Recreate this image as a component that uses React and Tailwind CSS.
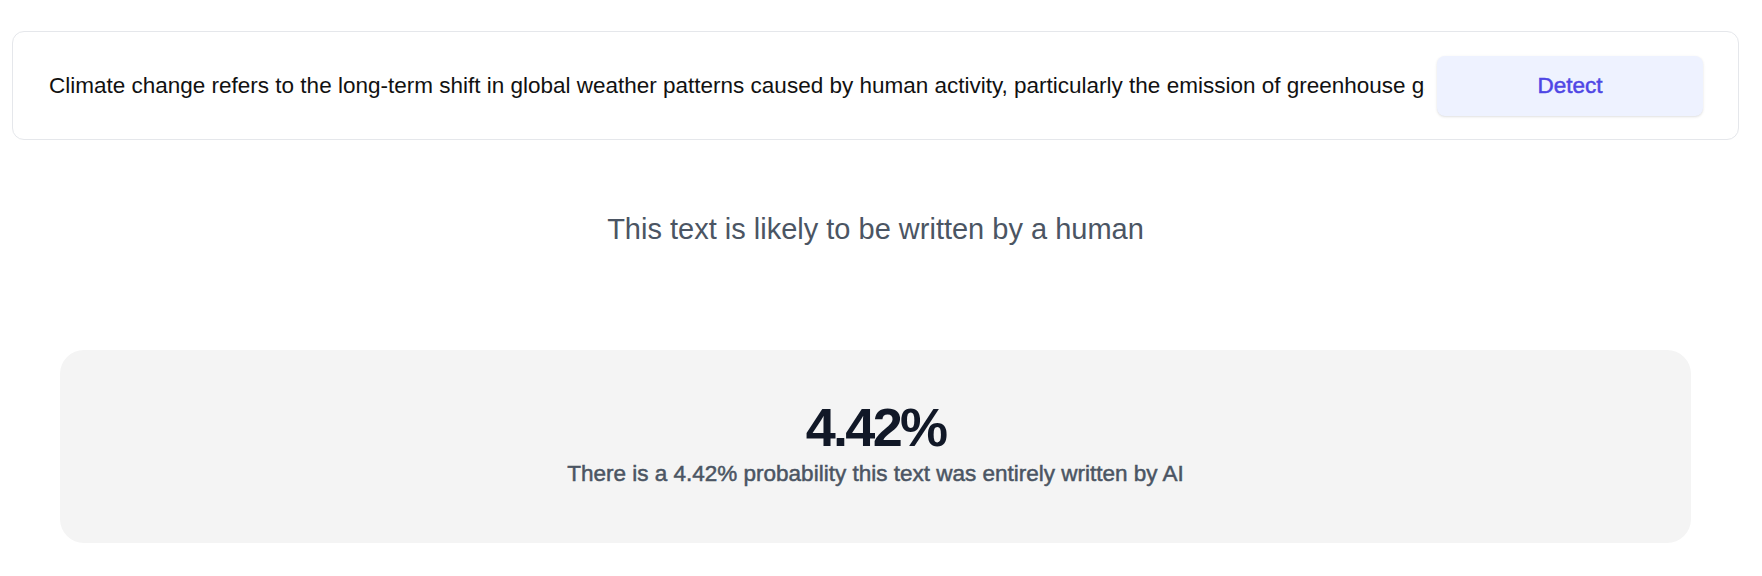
import React from "react";

export default function App() {
  const text =
    "Climate change refers to the long-term shift in global weather patterns caused by human activity, particularly the emission of greenhouse gases such as carbon dioxide and methane into the atmosphere.";
  return (
    <div className="min-h-[576px] bg-white pt-[31px] pl-[12px] pr-[23px] font-['Liberation_Sans',Arial,sans-serif]">
      <div className="h-[109px] rounded-xl border border-[#e5e7eb] bg-white pl-[36px] pr-[35px] flex items-center gap-3">
        <input
          readOnly
          value={text}
          className="flex-1 min-w-0 bg-transparent outline-none text-[22.5px] leading-none text-[#111111] p-0"
        />
        <button className="w-[266px] h-[60px] shrink-0 rounded-lg bg-[#eef2ff] text-[#4f46e5] text-[22.5px] font-normal [-webkit-text-stroke:0.5px_#4f46e5] shadow-sm">
          Detect
        </button>
      </div>

      <h2 className="mt-[75px] text-center text-[29px] leading-none font-normal text-[#4b5563]">
        This text is likely to be written by a human
      </h2>

      <div className="mt-[106px] mx-12 h-[193px] rounded-3xl bg-[#f4f4f4] flex flex-col items-center pt-[50px]">
        <div className="text-[54px] leading-none font-bold tracking-[-0.05em] text-[#111827]">
          4.42%
        </div>
        <p className="mt-[9px] text-[22.5px] leading-none font-normal [-webkit-text-stroke:0.5px_#4b5563] text-[#4b5563]">
          There is a 4.42% probability this text was entirely written by AI
        </p>
      </div>
    </div>
  );
}
